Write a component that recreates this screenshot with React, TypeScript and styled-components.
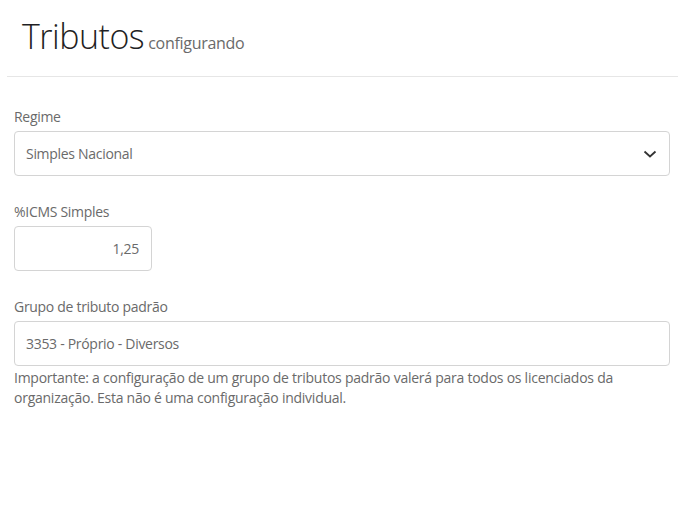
import styled, { createGlobalStyle } from 'styled-components'

const GlobalStyle = createGlobalStyle`
  html, body {
    margin: 0;
    background: #fff;
    font-family: 'Open Sans', 'Liberation Sans', sans-serif;
    color: #6a6a6a;
  }
  * {
    box-sizing: border-box;
  }
`

const Page = styled.div`
  padding: 0 10px 0 7px;
`

const Header = styled.header`
  display: flex;
  align-items: baseline;
  gap: 4px;
  padding: 12px 15px 16px;
  border-bottom: 1px solid #e6e6e6;
`

const Title = styled.h1`
  margin: 0;
  font-size: 34px;
  font-weight: 300;
  letter-spacing: -0.5px;
  line-height: 48px;
  color: #1f1f24;
`

const Subtitle = styled.small`
  font-size: 16px;
  font-weight: 400;
  letter-spacing: -0.3px;
  color: #6a6a6a;
`

const Form = styled.form`
  display: flex;
  flex-direction: column;
  gap: 26px;
  padding: 30px 8px 0 7px;
`

const Field = styled.div`
  display: flex;
  flex-direction: column;
`

const Label = styled.label`
  font-size: 14px;
  line-height: 20px;
  letter-spacing: -0.3px;
  margin-bottom: 4px;
  color: #6a6a6a;
`

const Control = styled.div<{ $width?: number }>`
  position: relative;
  display: flex;
  align-items: center;
  justify-content: ${({ $width }) => ($width ? 'flex-end' : 'flex-start')};
  width: ${({ $width }) => ($width ? `${$width}px` : '100%')};
  height: 45px;
  padding: 0 12px 0 11px;
  border: 1px solid #d4d4d4;
  border-radius: 4px;
  font-size: 14px;
  letter-spacing: -0.3px;
  color: #6a6a6a;
`

const Chevron = styled.svg`
  position: absolute;
  right: 12px;
  top: 50%;
  margin-top: -5px;
`

const Help = styled.p`
  margin: 2px 0 0;
  font-size: 14px;
  line-height: 20px;
  letter-spacing: -0.25px;
  color: #6a6a6a;
`

export default function App() {
  return (
    <Page>
      <GlobalStyle />
      <Header>
        <Title>Tributos</Title>
        <Subtitle>configurando</Subtitle>
      </Header>
      <Form>
        <Field>
          <Label>Regime</Label>
          <Control>
            Simples Nacional
            <Chevron width="14" height="10" viewBox="0 0 14 10">
              <path d="M1.5 2.5 L7 7.5 L12.5 2.5" fill="none" stroke="#333" strokeWidth="1.8" />
            </Chevron>
          </Control>
        </Field>
        <Field>
          <Label>%ICMS Simples</Label>
          <Control $width={138}>1,25</Control>
        </Field>
        <Field>
          <Label>Grupo de tributo padrão</Label>
          <Control>3353 - Próprio - Diversos</Control>
          <Help>
            Importante: a configuração de um grupo de tributos padrão valerá para todos os licenciados da
            organização. Esta não é uma configuração individual.
          </Help>
        </Field>
      </Form>
    </Page>
  )
}
